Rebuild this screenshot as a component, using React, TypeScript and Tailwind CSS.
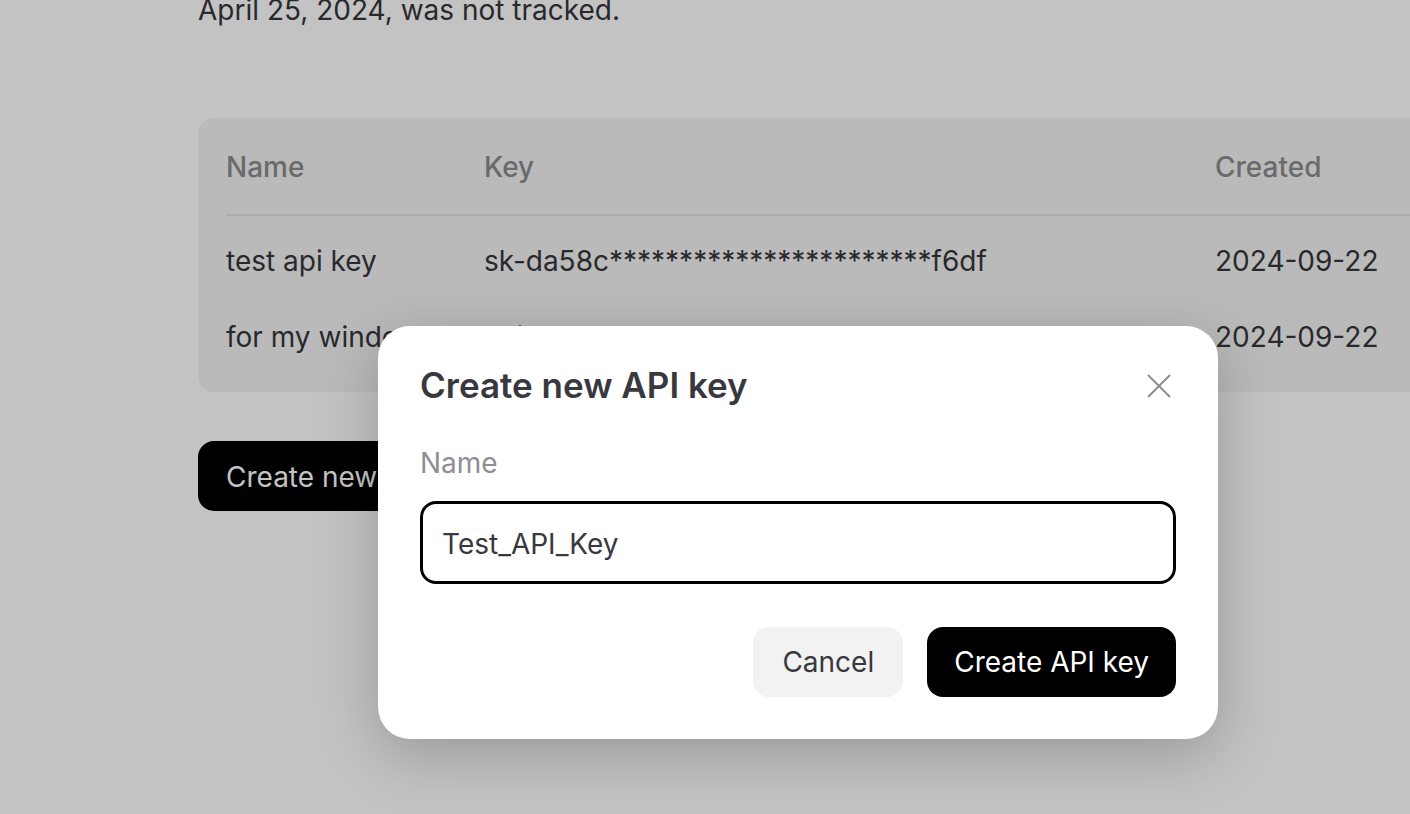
import React from 'react';

const rows = [
  { name: 'test api key', key: 'sk-da58c***********************f6df', created: '2024-09-22' },
  { name: 'for my windows machine', key: 'sk-7e21b***********************0a9c', created: '2024-09-22' },
];

const App: React.FC = () => {
  return (
    <div className="relative h-[814px] overflow-hidden bg-white font-['Inter',sans-serif]">
      {/* Page under the dialog */}
      <div className="-mt-[10px] pl-[198px]">
        <p className="text-[28px] leading-[40px] text-[#36363c]">April 25, 2024, was not tracked.</p>

        <div className="mt-[88px] w-[1320px] rounded-2xl bg-[#f4f4f4] px-7 pb-[18px]">
          <div className="flex h-[98px] items-center border-b-2 border-[#e3e3e3] pt-[2px] text-[28px] font-medium text-[#8b8b8e]">
            <div className="w-[258px]">Name</div>
            <div className="w-[731px]">Key</div>
            <div>Created</div>
          </div>
          <div className="pt-[6px]">
            {rows.map((r) => (
              <div key={r.name} className="flex h-[76px] items-center pt-[2px] text-[28px] text-[#36363c]">
                <div className="w-[258px] whitespace-nowrap">{r.name}</div>
                <div className="w-[731px] whitespace-nowrap">{r.key}</div>
                <div>{r.created}</div>
              </div>
            ))}
          </div>
        </div>

        <button className="mt-[49px] h-[70px] rounded-2xl bg-black px-7 pt-[2px] text-[28px] text-white">
          Create new secret key
        </button>
      </div>

      {/* Backdrop */}
      <div className="absolute inset-0 bg-black/[0.235]" />

      {/* Dialog */}
      <div className="absolute left-[378px] top-[326px] w-[840px] rounded-[32px] bg-white px-[42px] pb-[42px] pt-[40px] shadow-[0_16px_60px_rgba(0,0,0,0.22)]">
        <div className="flex h-[40px] items-center justify-between">
          <h2 className="-mt-[2px] text-[35px] font-semibold leading-[40px] text-[#38383e]">Create new API key</h2>
          <button className="mr-[5px] flex h-[24px] w-[24px] items-center justify-center">
            <svg width="24" height="24" viewBox="0 0 24 24" fill="none" stroke="#8a8a8a" strokeWidth="1.8" strokeLinecap="round">
              <path d="M1.5 1.5L22.5 22.5M22.5 1.5L1.5 22.5" />
            </svg>
          </button>
        </div>

        <label className="mt-[39px] block text-[28px] leading-[36px] text-[#8e8e93]">Name</label>
        <div className="mt-[20px] flex h-[83px] items-center rounded-2xl border-[3px] border-black px-[19px] pt-[2px] text-[28px] text-[#38383e]">
          Test_API_Key
        </div>

        <div className="mt-[43px] flex justify-end gap-6">
          <button className="h-[70px] rounded-2xl bg-[#f2f2f2] px-[29px] text-[28px] text-[#38383e]">Cancel</button>
          <button className="h-[70px] rounded-2xl bg-black px-[27px] text-[28px] text-white">Create API key</button>
        </div>
      </div>
    </div>
  );
};

export default App;
